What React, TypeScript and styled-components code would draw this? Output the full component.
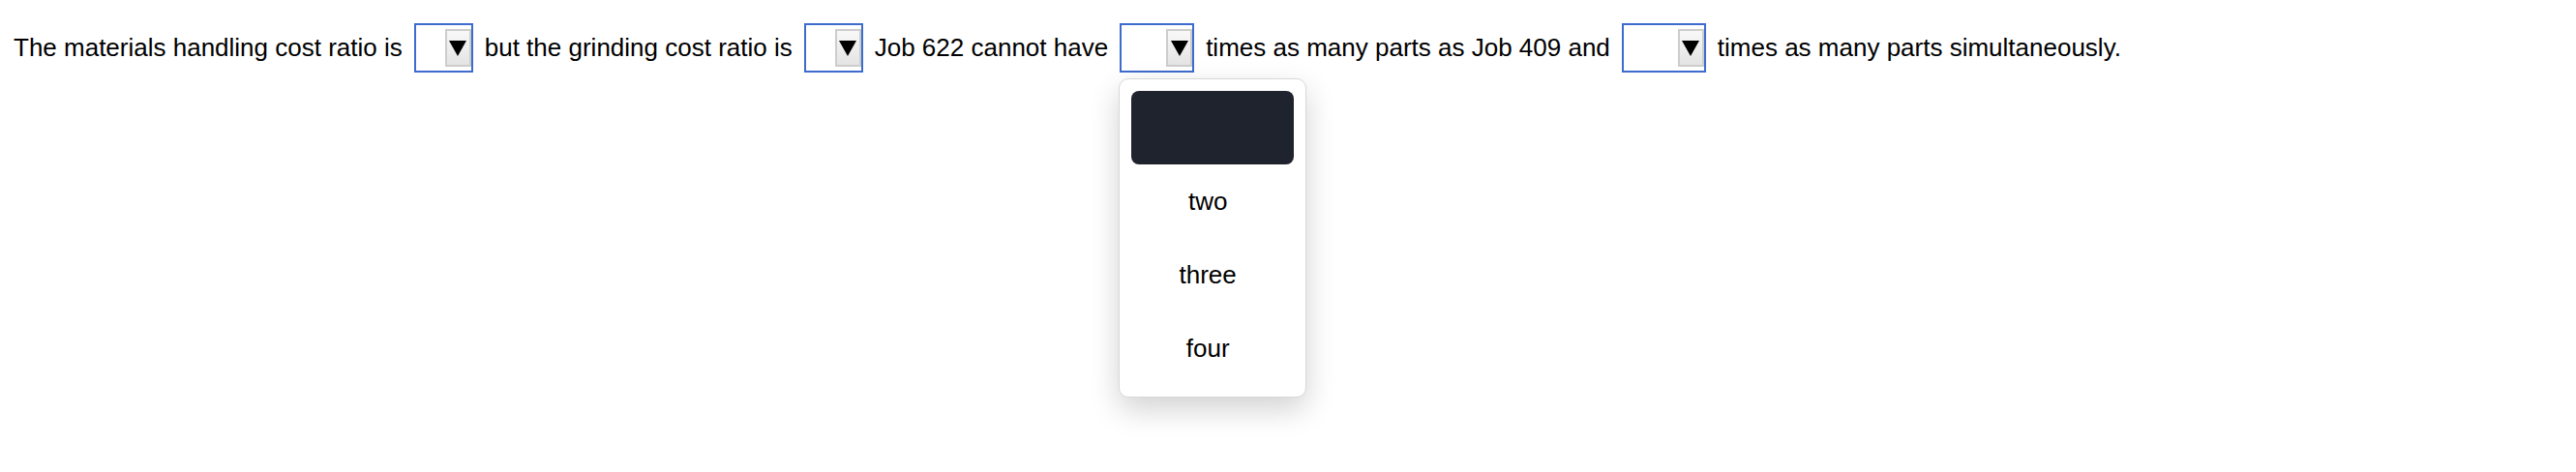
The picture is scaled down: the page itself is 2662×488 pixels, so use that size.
import React from 'react';
import styled, { createGlobalStyle } from 'styled-components';

// Styles
const GlobalStyle = createGlobalStyle`
  body {
    margin: 0;
    background: #fff;
    font-family: 'Liberation Sans', Arial, sans-serif;
    color: #000;
  }
`;

const Page = styled.div`
  min-height: 100vh;
`;

const Sentence = styled.div`
  display: flex;
  align-items: center;
  gap: 12px;
  padding: 24px 14px;
  font-size: 26px;
  white-space: nowrap;
`;

const Blank = styled.div<{ $width: number }>`
  position: relative;
  display: flex;
  justify-content: flex-end;
  align-items: center;
  box-sizing: border-box;
  width: ${(p) => p.$width}px;
  height: 51px;
  border: 2px solid #3d6bce;
  background: #fff;
`;

const ArrowButton = styled.div`
  display: flex;
  align-items: center;
  justify-content: center;
  box-sizing: border-box;
  width: 27px;
  height: 39px;
  border: 2px solid #cdcdcd;
  background: linear-gradient(#f8f8f8, #e4e4e4);

  .tri {
    width: 0;
    height: 0;
    border-left: 9px solid transparent;
    border-right: 9px solid transparent;
    border-top: 16px solid #000;
  }
`;

const Menu = styled.div`
  position: absolute;
  top: calc(100% + 8px);
  left: -3px;
  z-index: 10;
  box-sizing: border-box;
  width: 194px;
  padding: 12px;
  background: #fff;
  border: 1px solid #d8d8d8;
  border-radius: 10px;
  box-shadow: 0 12px 30px rgba(0, 0, 0, 0.18);
`;

const Option = styled.div<{ $active?: boolean }>`
  display: flex;
  align-items: center;
  justify-content: center;
  height: 76px;
  padding-right: 10px;
  border-radius: 8px;
  font-size: 26px;
  background: ${(p) => (p.$active ? '#1f232d' : 'transparent')};
  color: ${(p) => (p.$active ? '#fff' : '#000')};
`;

interface BlankProps {
  width: number;
  options?: string[];
}

const DropBlank: React.FC<BlankProps> = ({ width, options }) => {
  return (
    <Blank $width={width}>
      <ArrowButton>
        <div className="tri" />
      </ArrowButton>
      {options && (
        <Menu>
          {options.map((o, i) => (
            <Option key={i} $active={i === 0}>
              {o}
            </Option>
          ))}
        </Menu>
      )}
    </Blank>
  );
};

const App: React.FC = () => {
  return (
    <Page>
      <GlobalStyle />
      <Sentence>
        <span>The materials handling cost ratio is</span>
        <DropBlank width={61} />
        <span>but the grinding cost ratio is</span>
        <DropBlank width={61} />
        <span>Job 622 cannot have</span>
        <DropBlank width={77} options={['', 'two', 'three', 'four']} />
        <span>times as many parts as Job 409 and</span>
        <DropBlank width={87} />
        <span>times as many parts simultaneously.</span>
      </Sentence>
    </Page>
  );
};

export default App;
